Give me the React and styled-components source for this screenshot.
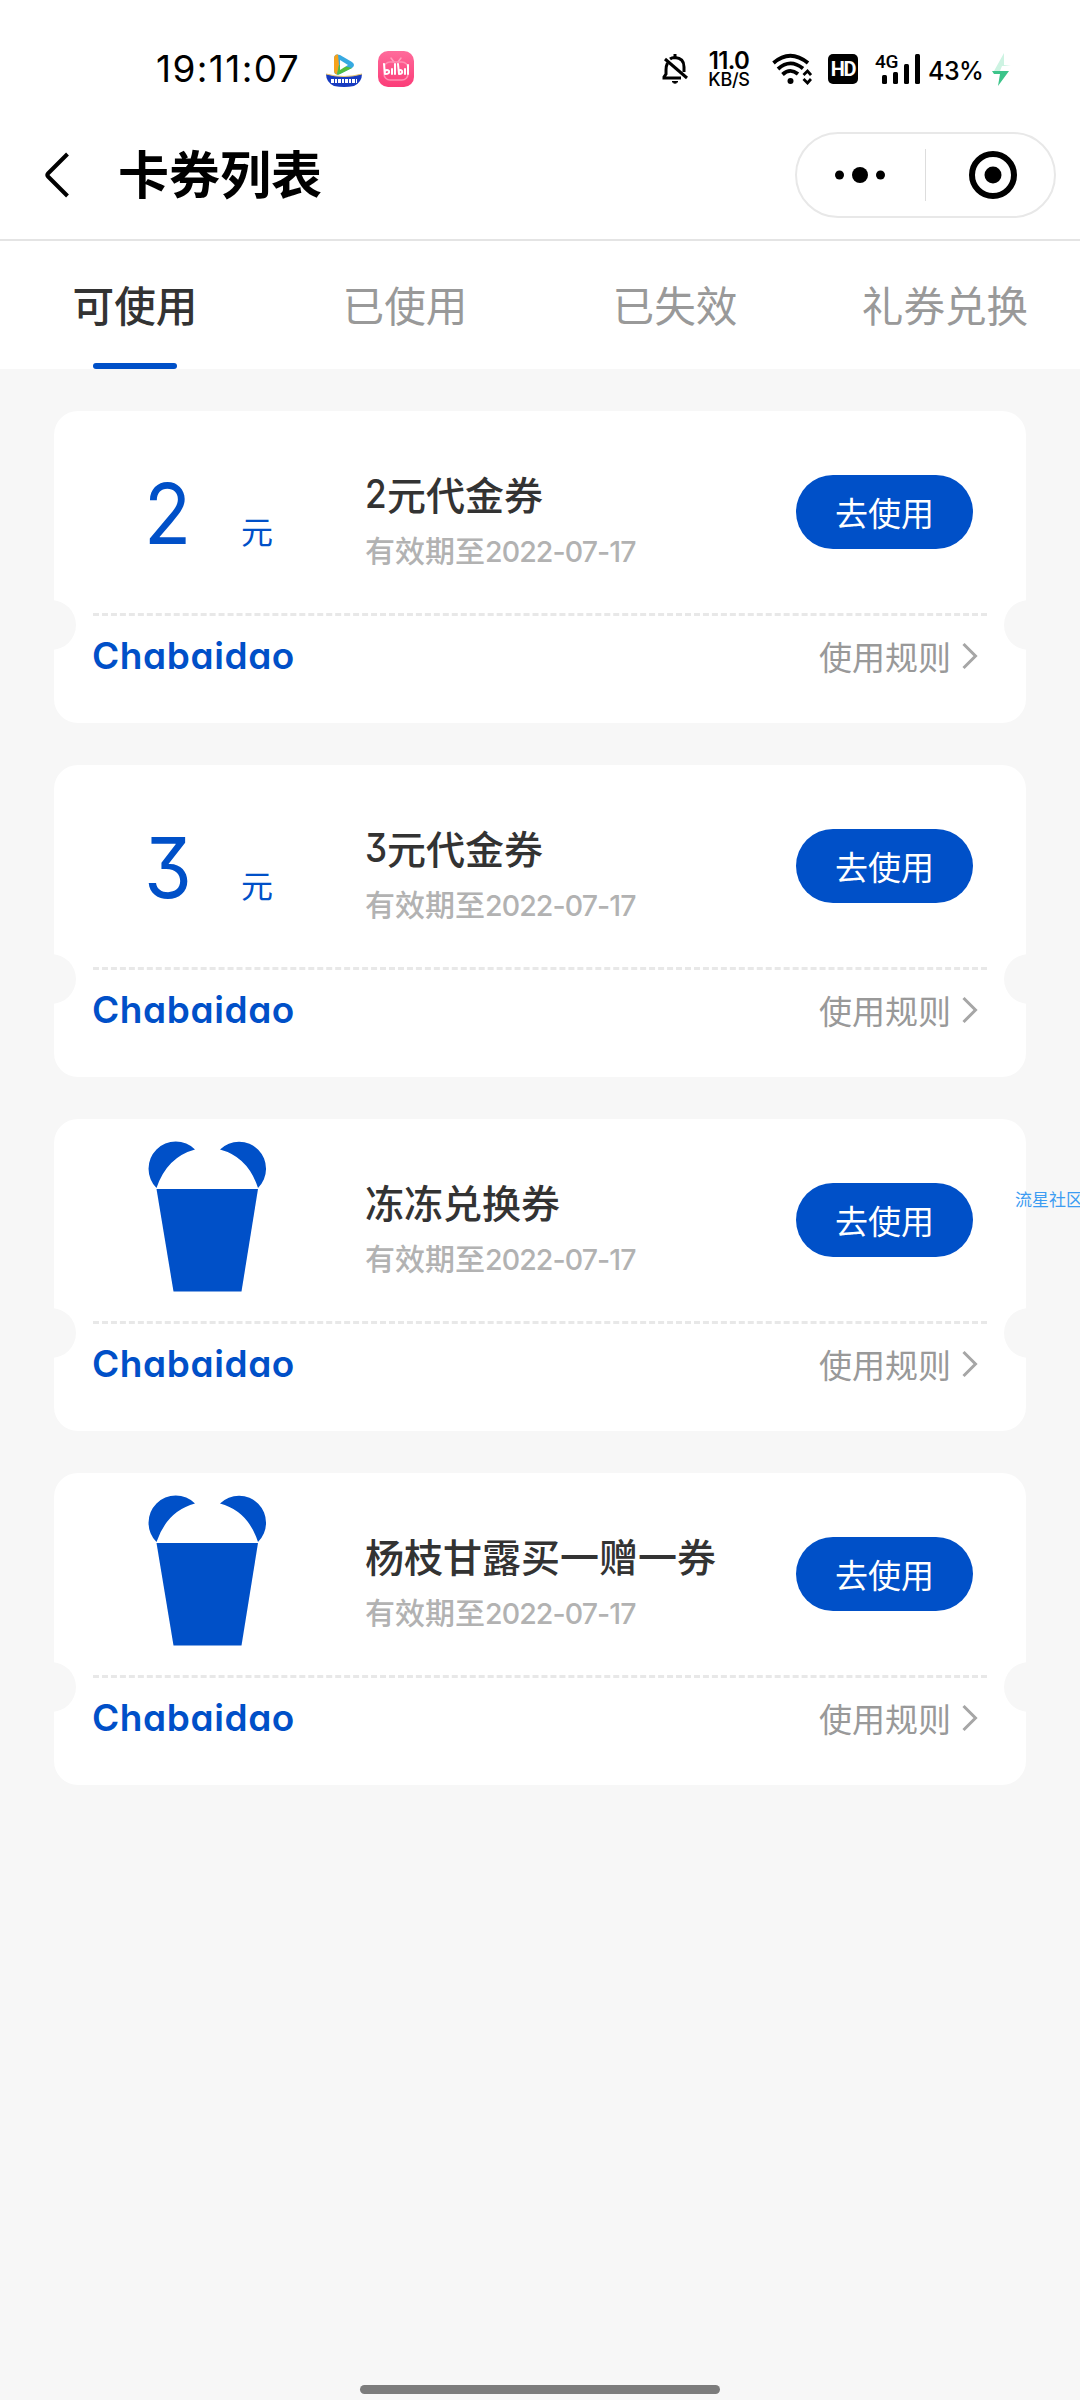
import styled, { createGlobalStyle, css } from "styled-components";

const GlobalStyle = createGlobalStyle`
  html,
  body {
    margin: 0;
    padding: 0;
  }

  * {
    box-sizing: border-box;
  }
`;

const blue = "#0050c8";
const cjk = `"Noto Sans CJK SC", sans-serif`;

const Screen = styled.div`
  position: relative;
  width: 1080px;
  height: 2400px;
  overflow: hidden;
  display: flex;
  flex-direction: column;
  background: #f7f7f7;
  font-family: Inter, ${cjk};
  color: #000;
`;

const StatusBar = styled.header`
  height: 108px;
  flex: none;
  display: flex;
  align-items: center;
  padding: 30px 68px 0 156px;
  background: #fff;
`;

const Clock = styled.span`
  width: 170px;
  font-size: 37px;
  font-weight: 400;
  line-height: 40px;
  letter-spacing: 1.4px;
  white-space: nowrap;
`;

const AppIcons = styled.div`
  display: flex;
  gap: 16px;
  flex: 1;
`;

const BiliBadge = styled.span`
  width: 36px;
  height: 36px;
  border-radius: 10px;
  background: linear-gradient(#ff6b9b, #fb3c78);
  display: grid;
  place-items: center;
`;

const StatusIcons = styled.div`
  display: flex;
  align-items: center;
`;

const NetSpeed = styled.div`
  width: 44px;
  margin: 2px 21px 0 19px;
  display: flex;
  flex-direction: column;
  align-items: center;
  font-weight: 500;
  white-space: nowrap;
`;

const SpeedValue = styled.span`
  font-size: 24px;
  font-weight: 600;
  line-height: 20px;
  letter-spacing: -0.6px;
`;

const SpeedUnit = styled.span`
  font-size: 18px;
  line-height: 18px;
  letter-spacing: -0.3px;
`;

const HdBadge = styled.span`
  width: 30px;
  height: 30px;
  margin: 0 18px 0 16px;
  border-radius: 5px;
  background: #000;
  color: #fff;
  font: 700 20px/30px Roboto, sans-serif;
  letter-spacing: -1.2px;
  text-align: center;
`;

const Battery = styled.span`
  width: 53px;
  margin: 3px 11px 0 7px;
  font-size: 25px;
  font-weight: 500;
  line-height: 30px;
  letter-spacing: -0.5px;
  white-space: nowrap;
`;

const NavBar = styled.nav`
  height: 133px;
  flex: none;
  display: flex;
  align-items: center;
  padding: 3px 24px 0 44px;
  background: #fff;
  border-bottom: 2px solid #e4e4e4;
`;

const PageTitle = styled.h1`
  margin: 0 auto 7px 48px;
  font: 700 51px/60px ${cjk};
`;

const Capsule = styled.div`
  width: 261px;
  height: 86px;
  display: flex;
  align-items: center;
  border: 2px solid #e8e8e8;
  border-radius: 43px;
`;

const CapsuleHalf = styled.span`
  width: 128px;
  height: 52px;
  display: grid;
  place-items: center;
  padding-right: 2px;

  & + & {
    flex: 1;
    padding: 0 0 0 5px;
    border-left: 1px solid #ddd;
  }
`;

const Tabs = styled.div`
  height: 128px;
  flex: none;
  display: grid;
  grid-template-columns: repeat(4, 1fr);
  background: #fff;
`;

const Tab = styled.div`
  display: flex;
  flex-direction: column;
  align-items: center;
  justify-content: space-between;
  padding-top: 33px;
  font: ${({ $active }) => ($active ? 500 : 400)} 41.6px/60px ${cjk};
  color: ${({ $active }) => ($active ? "#333" : "#999")};

  ${({ $active }) =>
    $active &&
    css`
      &::after {
        content: "";
        width: 84px;
        height: 6px;
        border-radius: 3px;
        background: ${blue};
      }
    `}
`;

const CouponList = styled.main`
  display: flex;
  flex-direction: column;
  gap: 42px;
  padding: 42px 54px;
`;

const Card = styled.article`
  position: relative;
  height: 312px;
  padding: 0 39px;
  border-radius: 24px;
  background: #fff;
  overflow: hidden;

  &::before,
  &::after {
    content: "";
    position: absolute;
    top: 189px;
    width: 50px;
    height: 50px;
    border-radius: 50%;
    background: #f7f7f7;
  }

  &::before {
    left: -28px;
  }

  &::after {
    right: -28px;
  }
`;

const CardTop = styled.div`
  height: 205px;
  display: flex;
  align-items: flex-start;
  border-bottom: 3px dashed #e8e8e8;
`;

const Value = styled.div`
  width: 272px;
  display: flex;
  align-items: baseline;
  padding: 55px 0 0 51px;
  color: ${blue};
`;

/* cv09 is Inter's flat-topped three */
const Amount = styled.span`
  width: 97px;
  font: 400 84px/96px Inter, sans-serif;
  font-feature-settings: "cv09";
  transform: scaleX(0.92);
  transform-origin: left;
`;

const Unit = styled.span`
  font: 400 32px/40px ${cjk};
`;

const CupBox = styled.div`
  width: 272px;
  padding: 22px 0 0 55px;
`;

const Info = styled.div`
  flex: 1;
  padding-top: 57px;
`;

const CouponName = styled.h2`
  display: flex;
  height: 50px;
  margin: 0;
  font: 500 39px/50px ${cjk};
  color: #333;
  white-space: nowrap;
`;

const NameAmount = styled.span`
  width: 22px;
  padding-top: 1px;
  font-family: Inter, sans-serif;
  font-feature-settings: "cv09";
  transform: scaleX(0.9);
  transform-origin: left;
`;

const Expiry = styled.p`
  margin: 13px 0 0;
  font: 500 30px/40px Inter, ${cjk};
  color: #b2b2b2;
  white-space: nowrap;
`;

const DateText = styled.span`
  font-size: 28.5px;
  letter-spacing: -0.9px;
`;

const UseButton = styled.button`
  width: 177px;
  height: 74px;
  margin: 64px 14px 0 0;
  padding: 0;
  border: 0;
  border-radius: 37px;
  background: ${blue};
  color: #fff;
  font: 400 33px/48px ${cjk};
`;

const CardBottom = styled.div`
  display: flex;
  align-items: center;
  justify-content: space-between;
  padding: 15px 9px 0 0;
`;

const Brand = styled.span`
  margin-left: -1px;
  font: 600 37px/50px Inter, sans-serif;
  font-feature-settings: "cv11";
  letter-spacing: 0.6px;
  color: ${blue};
`;

const Rules = styled.span`
  display: flex;
  align-items: center;
  gap: 11px;
  font: 400 33px/50px ${cjk};
  color: #999;
`;

const Watermark = styled.span`
  position: absolute;
  left: 1015px;
  top: 1187px;
  font: 400 17px/24px ${cjk};
  color: #3c9cf2;
  white-space: nowrap;
`;

const HomeBar = styled.div`
  width: 360px;
  height: 9px;
  margin: auto auto 6px;
  flex: none;
  border-radius: 5px;
  background: #7c7c7c;
`;

function VideoIcon() {
  return (
    <svg width="36" height="36" viewBox="0 0 36 36">
      <path d="M8 8Q8 2 14 4L26 11Q30 14 26 17L14 23Q8 25 8 19Z" fill="#36a9e1" />
      <path d="M8 8Q8 3 12 3.500L13 14L11 23.500Q8 23 8 19Z" fill="#f7a21b" />
      <path d="M11 23.500L13 14L26 17L14 23Q12 24 11 23.500Z" fill="#52bd3c" />
      <path d="M14 9L22 14L14 19Z" fill="#fff" />
      <path d="M0 23Q18 28 36 23Q36 31 28 35Q18 37 8 35Q0 31 0 23Z" fill="#173bc0" />
      <path d="M0 23Q18 28 36 23" fill="none" stroke="#e9c46a" strokeWidth="1" />
      <path d="M5 30H31" stroke="#fff" strokeWidth="4" strokeDasharray="3 1 2 1" />
    </svg>
  );
}

function BiliIcon() {
  return (
    <svg width="32" height="32" viewBox="0 0 32 32" fill="none" strokeLinecap="round">
      <path d="M11 5L14 9M21 5L18 9" stroke="#ff9fbd" strokeWidth="1.500" />
      <rect x="4" y="9" width="24" height="18" rx="6" stroke="#ff8fb2" strokeWidth="1.500" />
      <g stroke="#fff" strokeWidth="2">
        <path d="M4 11L5 21M5 21Q10 21 9 18Q7 16 5 18M12 16V21M15 11V21" />
        <path d="M18 11L19 21M19 21Q23 21 22 18Q21 16 19 18M25 16V21M28 12V21" />
      </g>
    </svg>
  );
}

function BellOffIcon() {
  return (
    <svg width="26" height="32" viewBox="0 0 26 32" fill="none" stroke="#000" strokeWidth="3">
      <path d="M5.500 10Q4 13 4 17V21L2 24V25H19" />
      <path d="M8 6Q10 4.500 13 4.500Q22 5 22 14V19" />
      <path d="M13 1V5" />
      <path d="M3 6L25 25" />
      <path d="M10 28.500H16Q13 32 10 28.500Z" fill="#000" strokeWidth="1" />
    </svg>
  );
}

function WifiIcon() {
  return (
    <svg width="40" height="32" viewBox="0 0 40 32" fill="none" stroke="#000" strokeWidth="3.800">
      <path d="M1.500 10Q18 -4.500 36 10" />
      <path d="M6 16Q18 5 31 15.500" />
      <path d="M10.500 21.500Q18 14.500 26 21" />
      <circle cx="18.500" cy="28" r="3" fill="#000" stroke="none" />
      <path d="M31.500 22L35.500 18L39 22M31.500 26L35.500 30L39 26" strokeWidth="2.800" />
    </svg>
  );
}

const SignalBox = styled.div`
  position: relative;
  width: 45px;
  height: 32px;
`;

const NetworkType = styled.span`
  position: absolute;
  left: -1px;
  top: 0;
  font: 500 19px/17px Roboto, sans-serif;
  letter-spacing: -0.3px;
`;

function Signal() {
  return (
    <SignalBox>
      <NetworkType>4G</NetworkType>
      <svg width="45" height="32" viewBox="0 0 45 32">
        <rect x="6" y="22" width="5" height="9" rx="1.500" />
        <rect x="17" y="19" width="5" height="12" rx="1.500" />
        <rect x="28" y="11" width="5" height="20" rx="1.500" />
        <rect x="39" y="1" width="5" height="30" rx="1.500" />
      </svg>
    </SignalBox>
  );
}

function BoltIcon() {
  return (
    <svg width="20" height="34" viewBox="0 0 20 34">
      <path d="M12 1L2 19H8L10 14H19L12 13Z" fill="#cdf3e2" />
      <path d="M0 19H17L6 34L8 22H2Z" fill="#3cc48a" />
    </svg>
  );
}

function CupIcon() {
  return (
    <svg width="119" height="151" viewBox="0 0 119 151" fill={blue}>
      <path d="M8.500 47A27 27 0 0 1 47 8.500Q19 16 8.500 47Z" />
      <path d="M110 47A26.900 26.900 0 0 0 72 8.500Q100 16 110 47Z" />
      <path d="M8.500 48H110L93.500 150.500H25.500Z" />
    </svg>
  );
}

const tabs = ["可使用", "已使用", "已失效", "礼券兑换"];

const coupons = [
  { amount: "2", name: "元代金券" },
  { amount: "3", name: "元代金券" },
  { name: "冻冻兑换券" },
  { name: "杨枝甘露买一赠一券" },
];

function Coupon({ amount, name }) {
  return (
    <Card>
      <CardTop>
        {amount ? (
          <Value>
            <Amount>{amount}</Amount>
            <Unit>元</Unit>
          </Value>
        ) : (
          <CupBox>
            <CupIcon />
          </CupBox>
        )}
        <Info>
          <CouponName>
            {amount && <NameAmount>{amount}</NameAmount>}
            {name}
          </CouponName>
          <Expiry>
            有效期至<DateText>2022-07-17</DateText>
          </Expiry>
        </Info>
        <UseButton type="button">去使用</UseButton>
      </CardTop>
      <CardBottom>
        <Brand>Chabaidao</Brand>
        <Rules>
          使用规则
          <svg width="16" height="28" viewBox="0 0 16 28" fill="none">
            <path d="M1.500 2L13.500 14L1.500 26" stroke="#a6a6a6" strokeWidth="3" />
          </svg>
        </Rules>
      </CardBottom>
    </Card>
  );
}

export default function App() {
  return (
    <>
      <GlobalStyle />
      <Screen>
        <StatusBar>
          <Clock>19:11:07</Clock>
          <AppIcons>
            <VideoIcon />
            <BiliBadge>
              <BiliIcon />
            </BiliBadge>
          </AppIcons>
          <StatusIcons>
            <BellOffIcon />
            <NetSpeed>
              <SpeedValue>11.0</SpeedValue>
              <SpeedUnit>KB/S</SpeedUnit>
            </NetSpeed>
            <WifiIcon />
            <HdBadge>HD</HdBadge>
            <Signal />
            <Battery>43%</Battery>
            <BoltIcon />
          </StatusIcons>
        </StatusBar>
        <NavBar>
          <svg width="26" height="48" viewBox="0 0 26 48" fill="none">
            <path d="M23.500 3L4 22.500Q2.500 24 4 25.500L23.500 45" stroke="#000" strokeWidth="4" />
          </svg>
          <PageTitle>卡券列表</PageTitle>
          <Capsule>
            <CapsuleHalf>
              <svg width="54" height="20" viewBox="0 0 54 20">
                <circle cx="6.500" cy="10" r="4.500" />
                <circle cx="27" cy="10" r="8" />
                <circle cx="47.500" cy="10" r="4.500" />
              </svg>
            </CapsuleHalf>
            <CapsuleHalf>
              <svg width="50" height="50" viewBox="0 0 50 50">
                <circle cx="25" cy="25" r="21" fill="none" stroke="#000" strokeWidth="6" />
                <circle cx="25" cy="25" r="8.500" />
              </svg>
            </CapsuleHalf>
          </Capsule>
        </NavBar>
        <Tabs>
          {tabs.map((label, i) => (
            <Tab key={label} $active={i === 0}>
              {label}
            </Tab>
          ))}
        </Tabs>
        <CouponList>
          {coupons.map((coupon, i) => (
            <Coupon key={i} {...coupon} />
          ))}
        </CouponList>
        <Watermark>流星社区</Watermark>
        <HomeBar />
      </Screen>
    </>
  );
}
